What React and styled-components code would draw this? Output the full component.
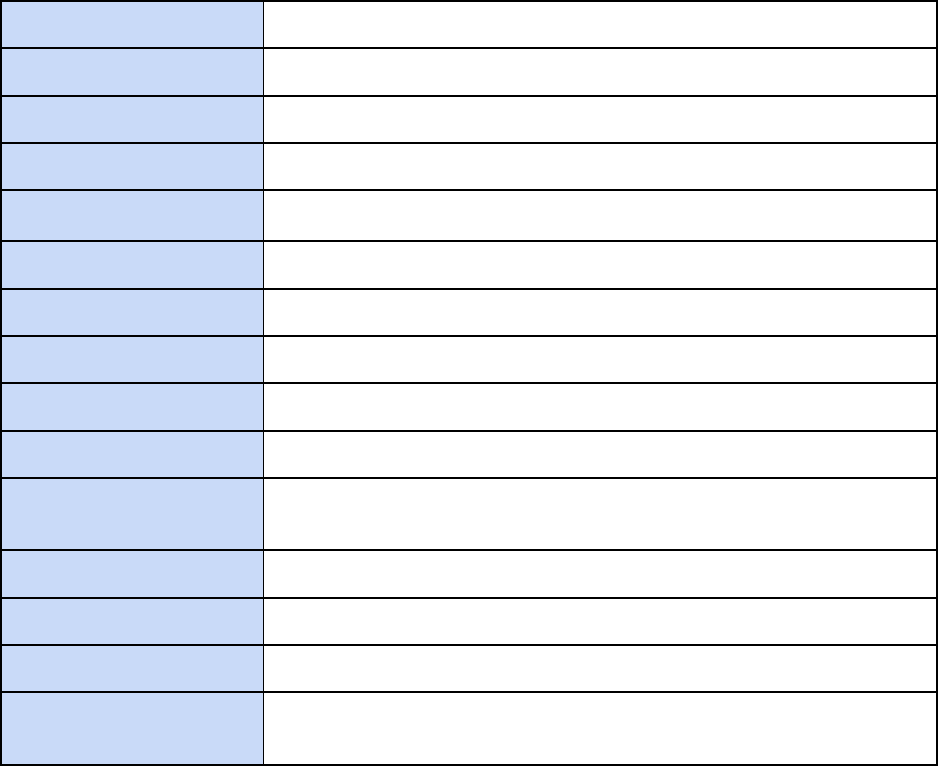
import styled, { createGlobalStyle } from "styled-components";

const rows = [45, 46, 45, 45, 49, 46, 45, 45, 46, 45, 70, 46, 45, 45, 71];

export default function App() {
  return (
    <>
      <GlobalStyle />
      <Sheet>
        {rows.map((h, i) => (
          <Row key={i} $h={h} $last={i === rows.length - 1}>
            <Label />
            <Value />
          </Row>
        ))}
      </Sheet>
    </>
  );
}

/* ---------------- styled ---------------- */
const GlobalStyle = createGlobalStyle`
  html, body {
    margin: 0;
    padding: 0;
    background: #ffffff;
    font-family: "Liberation Sans", Arial, sans-serif;
  }
`;

const Sheet = styled.div`
  width: 938px;
  box-sizing: border-box;
  border: 2px solid #000000;
  display: flex;
  flex-direction: column;
`;

const Row = styled.div`
  display: grid;
  grid-template-columns: 262px 1fr;
  height: ${(p) => p.$h + (p.$last ? 0 : 2)}px;
  box-sizing: border-box;
  border-bottom: ${(p) => (p.$last ? "none" : "2px solid #000000")};
`;

const Label = styled.div`
  background: #c9daf8;
  border-right: 1px solid #000000;
`;

const Value = styled.div`
  background: #ffffff;
`;
